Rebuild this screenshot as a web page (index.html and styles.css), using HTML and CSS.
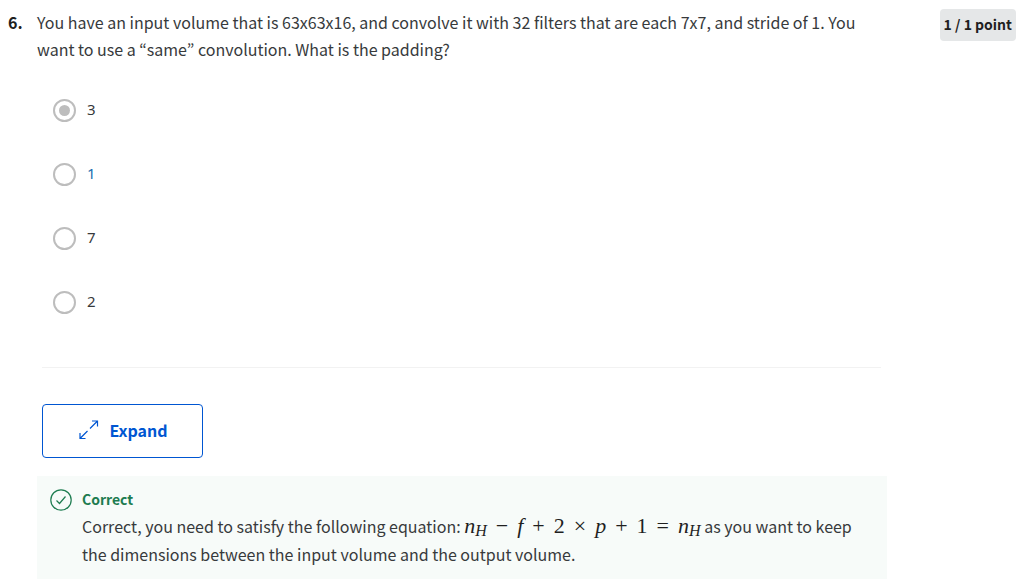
FILE: index.html
```
<!DOCTYPE html>
<html lang="en">
<head>
<meta charset="utf-8">
<title>Quiz question 6</title>
<link rel="stylesheet" href="styles.css">
</head>
<body>
<main class="question">
  <div class="number">6.</div>
  <div class="content">
    <form>
      <fieldset class="fieldset">
        <legend class="prompt">You have an input volume that is 63x63x16, and convolve it with 32 filters that are each 7x7, and stride of 1. You want to use a “same” convolution. What is the padding?</legend>
        <div class="options">
          <label class="option"><input class="radio" type="radio" name="answer" checked><span>3</span></label>
          <label class="option"><input class="radio" type="radio" name="answer"><span class="active">1</span></label>
          <label class="option"><input class="radio" type="radio" name="answer"><span>7</span></label>
          <label class="option"><input class="radio" type="radio" name="answer"><span>2</span></label>
        </div>
      </fieldset>
      <div class="actions">
        <button class="expand" type="button">
          <svg class="expand-icon" viewBox="0 0 20 20" aria-hidden="true"><path d="M11 8.5L18.5 1M13 1H18.5V6.5M8.5 11L1 18.5M1 13V18.5H6.5"/></svg>
          <span>Expand</span>
        </button>
      </div>
    </form>
    <section class="feedback">
      <svg class="check-icon" viewBox="0 0 22 22" aria-hidden="true"><circle cx="11" cy="11" r="10.2"/><path d="M6.5 11.5L9.5 14.5L15.5 7.5"/></svg>
      <div>
        <h2 class="verdict">Correct</h2>
        <p class="explanation">Correct, you need to satisfy the following equation: <span class="math"><i>n</i><sub>H</sub><span class="op">−</span><i>f</i><span class="op">+</span>2<span class="op">×</span><i>p</i><span class="op">+</span>1<span class="op">=</span><i>n</i><sub>H</sub></span> as you want to keep the dimensions between the input volume and the output volume.</p>
      </div>
    </section>
  </div>
  <div class="points">1 / 1 point</div>
</main>
</body>
</html>
```
FILE: styles.css
```
* { box-sizing: border-box; }
body {
  margin: 0;
  background: #fff;
  color: #373a3c;
  font-family: "Noto Sans CJK KR", "Open Sans", sans-serif;
  font-size: 16px;
  line-height: 27px;
}
.question {
  display: grid;
  grid-template-columns: 29px minmax(0, 850px) 1fr;
  padding: 9px 8px 0;
}
.number { color: #1f1f1f; font-weight: 700; }
.fieldset { margin: 0; padding: 0; border: 0; min-width: 0; }
.prompt { padding: 0; }
.options {
  display: grid;
  gap: 40px;
  padding: 35px 16px 53px;
}
.option {
  display: flex;
  align-items: center;
  gap: 11px;
  height: 24px;
  font: 15px/24px "Noto Sans", sans-serif;
}
.option span { padding-bottom: 2px; }
.radio {
  appearance: none;
  display: grid;
  place-items: center;
  width: 23px;
  height: 23px;
  margin: 0;
  border: 2px solid #bdbdbd;
  border-radius: 50%;
}
.radio:checked::before {
  content: "";
  width: 11px;
  height: 11px;
  border-radius: 50%;
  background: #bdbdbd;
}
.active { color: #1a6fb0; }
.actions {
  margin: 0 6px 0 5px;
  padding: 36px 0 18px;
  border-top: 1px solid #f2f2f2;
}
.expand {
  display: flex;
  align-items: center;
  justify-content: center;
  gap: 10px;
  width: 161px;
  height: 54px;
  padding: 0 4px 2px 6px;
  border: 1px solid #0056d2;
  border-radius: 4px;
  background: #fff;
  color: #0056d2;
  font: inherit;
  font-weight: 700;
}
.expand-icon, .check-icon { fill: none; stroke: currentColor; }
.expand-icon { width: 20px; height: 20px; stroke-width: 1.2; }
.feedback {
  display: flex;
  gap: 10px;
  padding: 10px 24px 11px 13px;
  background: #f7fbf9;
}
.check-icon {
  flex: none;
  width: 22px;
  height: 22px;
  margin-top: 3px;
  color: #1d7c50;
  stroke-width: 1.2;
}
.verdict { margin: 0; color: #1d7c50; font-size: 14px; line-height: 26px; }
.explanation { margin: 0; line-height: 28px; }
.math {
  color: #1f1f1f;
  font-family: "Liberation Serif", serif;
  font-size: 22px;
  line-height: 20px;
  white-space: nowrap;
}
.math sub { font-size: 16px; font-style: italic; line-height: 1; vertical-align: -3px; }
.op { padding: 0 9px; }
.points {
  justify-self: end;
  align-self: start;
  padding: 0 4px 1px;
  border-radius: 4px;
  background: #e5e7e8;
  color: #1f1f1f;
  font-size: 14px;
  font-weight: 700;
  line-height: 31px;
}
```
